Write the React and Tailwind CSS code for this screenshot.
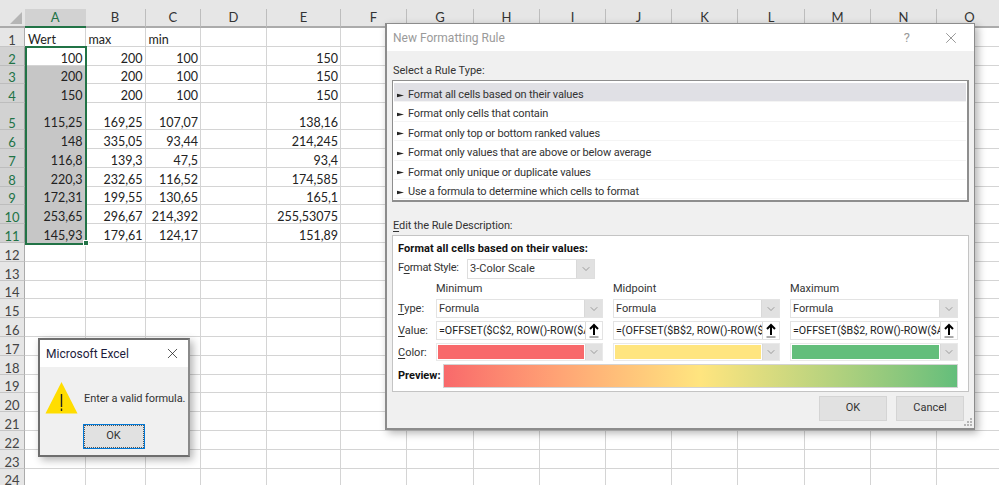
import { ChevronDown, X } from "lucide-react";

const columns = ["A", "B", "C", "D", "E", "F", "G", "H", "I", "J", "K", "L", "M", "N", "O"];

const sheet = {
  1: { A: "Wert", B: "max", C: "min" },
  2: { A: "100", B: "200", C: "100", E: "150" },
  3: { A: "200", B: "200", C: "100", E: "150" },
  4: { A: "150", B: "200", C: "100", E: "150" },
  5: { A: "115,25", B: "169,25", C: "107,07", E: "138,16" },
  6: { A: "148", B: "335,05", C: "93,44", E: "214,245" },
  7: { A: "116,8", B: "139,3", C: "47,5", E: "93,4" },
  8: { A: "220,3", B: "232,65", C: "116,52", E: "174,585" },
  9: { A: "172,31", B: "199,55", C: "130,65", E: "165,1" },
  10: { A: "253,65", B: "296,67", C: "214,392", E: "255,53075" },
  11: { A: "145,93", B: "179,61", C: "124,17", E: "151,89" },
};

const rules = [
  "Format all cells based on their values",
  "Format only cells that contain",
  "Format only top or bottom ranked values",
  "Format only values that are above or below average",
  "Format only unique or duplicate values",
  "Use a formula to determine which cells to format",
];

const points = [
  { label: "Minimum", value: "=OFFSET($C$2, ROW()-ROW($A$2),0)", color: "bg-[#f8696b]" },
  { label: "Midpoint", value: "=(OFFSET($B$2, ROW()-ROW($A$2),0)", color: "bg-[#ffe57f]" },
  { label: "Maximum", value: "=OFFSET($B$2, ROW()-ROW($A$2),0)", color: "bg-[#63be7b]" },
];

const rows = Array.from({ length: 24 }, (_, i) => i + 1);

function Sheet() {
  return (
    <div className="grid grid-cols-[25px_60.5px_60px_55.5px_66px_74px_66px_67px_66px_66px_66px_66px_67px_66px_66px_66px] grid-rows-[9px_19px_18.75px_18.75px_18.75px_18.75px_27.2px_18.8px_18.8px_18.8px_18.8px_18.8px_18.8px_18.8px_18.8px_18.8px_18.8px_18.8px_18.8px_18.8px_18.8px_18.8px_18.8px_18.8px_18.8px_18.8px] font-['Lato',sans-serif] text-[12.5px] text-[#222]">
      <div className="col-span-16 bg-[#e6e6e6]" />
      <div className="relative bg-[#e6e6e6] border-b-2 border-[#ababab]">
        <svg className="absolute right-[3px] bottom-[2px]" width="12" height="12" viewBox="0 0 12 12">
          <path d="M12 0V12H0Z" fill="#b5b5b5" />
        </svg>
      </div>
      {columns.map((c) => (
        <div
          key={c}
          className={
            c === "A"
              ? "flex items-center justify-center bg-[#d2d2d2] border-b-2 border-[#217346] text-[#217346] text-[13px]"
              : "flex items-center justify-center bg-[#e6e6e6] border-b-2 border-[#ababab] border-r border-r-[#bdbdbd] text-[#333] text-[13px]"
          }
        >
          {c}
        </div>
      ))}
      {rows.map((r) => (
        <Row key={r} r={r} />
      ))}
    </div>
  );
}

function Row({ r }) {
  const selected = r >= 2 && r <= 11;
  return (
    <>
      <div
        className={
          selected
            ? "flex items-end justify-center bg-[#d2d2d2] border-r border-[#9f9f9f] border-b border-b-[#bdbdbd] text-[#217346] text-[13px] leading-[12px]"
            : "flex items-end justify-center bg-[#e6e6e6] border-r border-[#ababab] border-b border-b-[#c6c6c6] text-[#444] text-[13px] leading-[12px]"
        }
      >
        {r}
      </div>
      {columns.map((c) => (
        <div
          key={c}
          className={
            c === "A" && r >= 3 && r <= 11
              ? "flex items-end justify-end pr-[2px] bg-[#c6c6c6] border-r border-b border-[#c6c6c6] leading-[12px]"
              : r === 1
                ? "flex items-end justify-start pl-[3px] border-r border-b border-[#d4d4d4] leading-[12px]"
                : "flex items-end justify-end pr-[2px] border-r border-b border-[#d4d4d4] leading-[12px]"
          }
        >
          {sheet[r]?.[c]}
        </div>
      ))}
    </>
  );
}

function ComboArrow({ narrow }) {
  return (
    <div className={`flex items-center justify-center bg-[#e1e1e1] border-l border-[#d9d9d9] ${narrow ? "w-[17px]" : "w-[18px]"}`}>
      <ChevronDown size={12} strokeWidth={1} className="text-[#555]" />
    </div>
  );
}

function RefButton() {
  return (
    <div className="flex items-center justify-center w-[17px] shrink-0 bg-white border-l border-[#d9d9d9]">
      <svg width="12" height="15" viewBox="0 0 12 15">
        <path d="M6 12V2M2 6l4-4 4 4" fill="none" stroke="#000" strokeWidth="2" />
        <path d="M1.5 14h9" stroke="#555" strokeWidth="1" />
      </svg>
    </div>
  );
}

function Under({ children, rest }) {
  return (
    <span>
      <span className="underline underline-offset-2">{children}</span>
      {rest}
    </span>
  );
}

function FormattingDialog() {
  return (
    <div className="absolute left-[385px] top-[23px] w-[590px] h-[407px] flex flex-col bg-[#f0f0f0] border-l-2 border-t border-r border-b-2 border-[#8c8c8c] shadow-[3px_3px_8px_rgba(0,0,0,0.3)] font-['Roboto',sans-serif] text-[11px] text-[#333]">
      <div className="flex items-center h-[27px] bg-white pl-[6px]">
        <span className="text-[12px] text-[#9a9a9a]">New Formatting Rule</span>
        <span className="ml-auto mr-[32px] text-[13px] text-[#999]">?</span>
        <X size={18} strokeWidth={1} className="mr-[14px] text-[#777]" />
      </div>
      <div className="flex-1 flex flex-col px-[5px] pt-[11px]">
        <div className="h-[18px] leading-[18px] pl-[1px]">Select a Rule Type:</div>
        <div className="h-[122px] bg-white border-2 border-[#8e8e8e] border-t border-l px-[1px] pt-[2px] flex flex-col">
          {rules.map((rule, i) => (
            <div
              key={rule}
              className={`flex items-center gap-[4px] h-[19.4px] pl-[3px] pt-[6px] border-b border-[#f4f4f4] tracking-[-0.15px] ${i === 0 ? "bg-[#e0e0e5]" : ""}`}
            >
              <svg width="7" height="5" viewBox="0 0 7 5">
                <path d="M0 0.8L7 2.5L0 4.2Z" fill="#222" />
              </svg>
              <span>{rule}</span>
            </div>
          ))}
        </div>
        <div className="mt-[14px] h-[19px] leading-[19px] pl-[1px] tracking-[-0.1px]">
          <Under rest="dit the Rule Description:">E</Under>
        </div>
        <div className="h-[157px] bg-white border border-[#c4c4c4] px-[5px] pt-[4px] flex flex-col">
          <div className="font-bold h-[18px] leading-[18px] text-[#111] tracking-[0.08px]">Format all cells based on their values:</div>
          <div className="flex items-center h-[21px]">
            <span className="w-[69px] whitespace-nowrap tracking-[-0.3px]">
              F<Under rest="rmat Style:">o</Under>
            </span>
            <div className="flex w-[128px] h-[20px] border border-[#dedede]">
              <span className="flex-1 pl-[2px] leading-[18px]">3-Color Scale</span>
              <ComboArrow />
            </div>
          </div>
          <div className="grid grid-cols-[28px_167px_167px_168px] gap-x-[10px] grid-rows-[20px_22px_22px_22px]">
            <span />
            {points.map((p) => (
              <span key={p.label} className="leading-[20px]">{p.label}</span>
            ))}
            <span className="leading-[20px]">
              <Under rest="ype:">T</Under>
            </span>
            {points.map((p) => (
              <div key={p.label} className="flex h-[19px] border border-[#e3e3e3]">
                <span className="flex-1 pl-[2px] leading-[17px]">Formula</span>
                <ComboArrow />
              </div>
            ))}
            <span className="leading-[20px]">
              <Under rest="alue:">V</Under>
            </span>
            {points.map((p) => (
              <div key={p.label} className="flex h-[19px] border border-[#e3e3e3]">
                <span className="flex-1 min-w-0 overflow-hidden whitespace-nowrap pl-[2px] leading-[17px] text-[10.7px] text-[#222]">{p.value}</span>
                <RefButton />
              </div>
            ))}
            <span className="leading-[20px]">
              <Under rest="olor:">C</Under>
            </span>
            {points.map((p) => (
              <div key={p.label} className="flex h-[18px] border border-[#e9e9e9]">
                <div className="flex-1 p-[1px]">
                  <div className={`h-full ${p.color}`} />
                </div>
                <ComboArrow narrow />
              </div>
            ))}
          </div>
          <div className="flex items-center h-[24px] -mt-[1px] mr-[5px]">
            <span className="w-[45px] font-bold text-[#111]">Preview:</span>
            <div className="flex-1 h-[24px] border border-[#d4d4d4] bg-gradient-to-r from-[#f8696b] via-[#ffe57f] to-[#63be7b]" />
          </div>
        </div>
        <div className="flex justify-end gap-[9px] mt-[4px] mr-[5px]">
          <div className="flex items-center justify-center w-[68px] h-[25px] bg-[#e1e1e1] border border-[#d4d4d4]">OK</div>
          <div className="flex items-center justify-center w-[68px] h-[25px] bg-[#e1e1e1] border border-[#d4d4d4]">Cancel</div>
        </div>
      </div>
      <svg className="absolute right-[1px] bottom-[1px]" width="9" height="9" viewBox="0 0 9 9">
        <path d="M6 0h2v2H6zM3 3h2v2H3zM6 3h2v2H6zM0 6h2v2H0zM3 6h2v2H3zM6 6h2v2H6z" fill="#b5b5b5" />
      </svg>
    </div>
  );
}

function AlertDialog() {
  return (
    <div className="absolute left-[38px] top-[338px] w-[152px] h-[119px] flex flex-col bg-[#f0f0f0] border-2 border-[#6e6e6e] border-r-[#8a8a8a] shadow-[3px_3px_8px_rgba(0,0,0,0.3)] font-['Roboto',sans-serif] text-[11px] text-[#333]">
      <div className="flex items-center h-[27px] bg-white pl-[6px]">
        <span className="text-[12px] text-[#1c1c3c]">Microsoft Excel</span>
        <X size={17} strokeWidth={1} className="ml-auto mr-[7px] text-[#111]" />
      </div>
      <div className="flex items-center pl-[5px] pt-[14px]">
        <svg width="33" height="33" viewBox="0 0 33 33">
          <path d="M16.5 1L32.5 32.5H0.5Z" fill="#ffdd00" />
          <path d="M16.5 13v13" stroke="#222" strokeWidth="1.4" />
          <path d="M16.5 27.5v2.5" stroke="#222" strokeWidth="1.4" />
        </svg>
        <span className="ml-[6px] pt-[3px] whitespace-nowrap tracking-[-0.1px]">Enter a valid formula.</span>
      </div>
      <div className="flex justify-center mt-[10px] mr-[1px]">
        <div className="flex items-center justify-center w-[62px] h-[25px] bg-[#e1e1e1] border border-[#0078d7] outline-1 -outline-offset-2 outline-dotted outline-[#555]">OK</div>
      </div>
    </div>
  );
}

export default function App() {
  return (
    <div className="relative w-[999px] h-[485px] overflow-hidden bg-white">
      <Sheet />
      {/* selection around A2:A11 */}
      <div className="absolute left-[25px] top-[46px] w-[62px] h-[199px] border-2 border-[#217346]" />
      <div className="absolute left-[83px] top-[240px] w-[6px] h-[6px] bg-[#217346] border border-white" />
      <FormattingDialog />
      <AlertDialog />
    </div>
  );
}
